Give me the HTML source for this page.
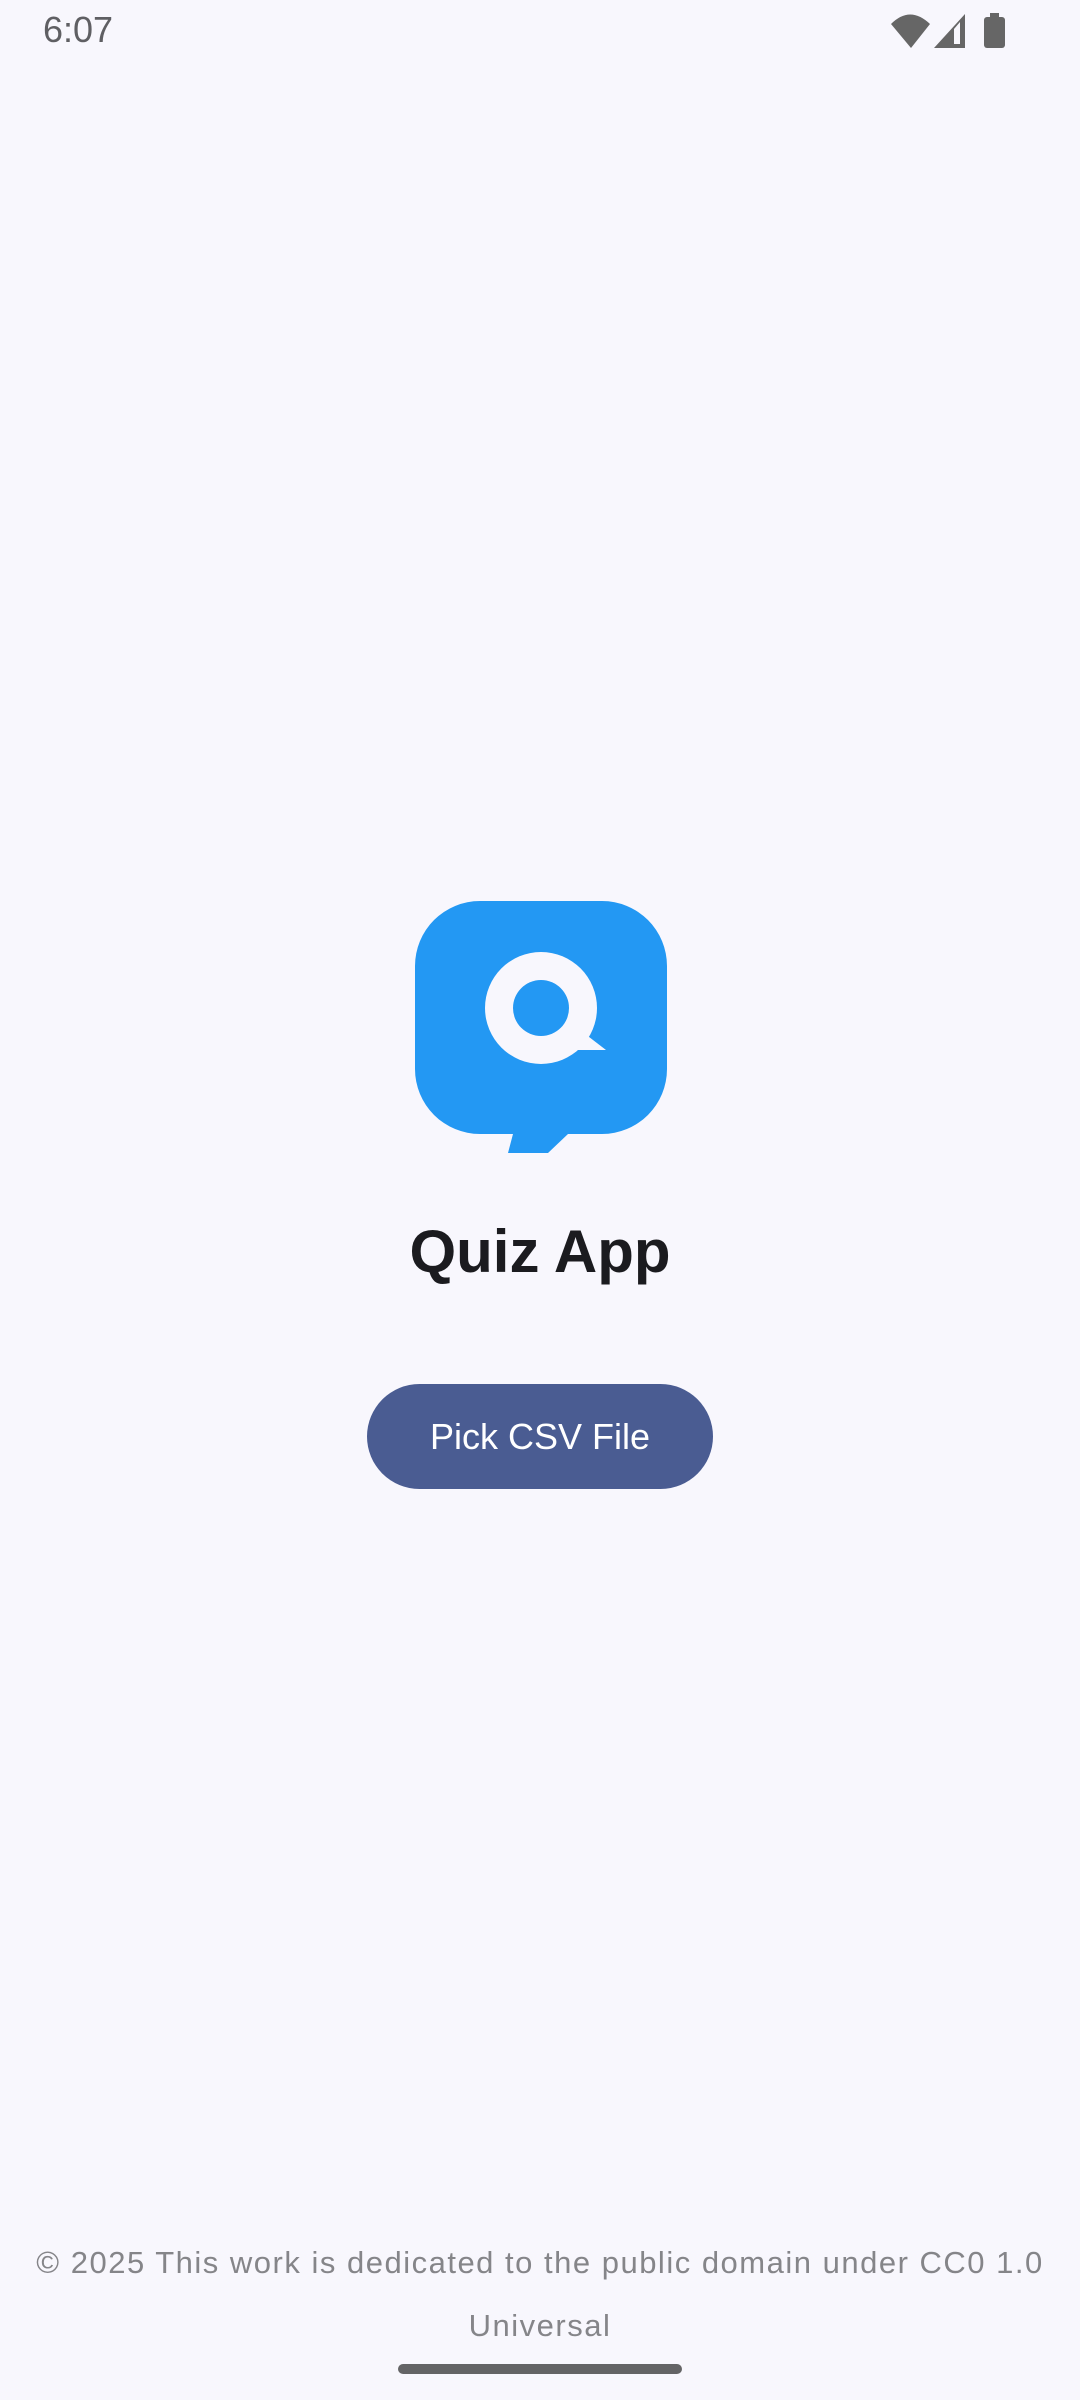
<!DOCTYPE html>
<html><head><meta charset="utf-8"><style>
html,body{margin:0;padding:0;}
body{width:1080px;height:2400px;background:#f8f7fd;position:relative;overflow:hidden;font-family:"Liberation Sans",sans-serif;}
.abs{position:absolute;}
</style></head><body>
<div class="abs" style="left:43px;top:8px;font-size:36px;color:#5f5f63;line-height:44px;">6:07</div>
<svg class="abs" style="left:880px;top:10px" width="140" height="44" viewBox="880 10 140 44">
<path d="M891 24 Q910 5 930 24 L911 48 Z" fill="#666"/>
<path d="M934 48 L965 14 L965 48 Z" fill="#666"/>
<path d="M954 29 L960 22 L960 44 L954 44 Z" fill="#f8f7fd"/>
<rect x="984" y="17" width="21" height="31" rx="3" fill="#666"/>
<rect x="990" y="13" width="9" height="5" fill="#666"/>
</svg>
<svg class="abs" style="left:0;top:0" width="1080" height="1200" viewBox="0 0 1080 1200">
<path d="M480 901 H602 A65 65 0 0 1 667 966 V1069 A65 65 0 0 1 602 1134 H568 L548 1153 H508 L513 1134 H480 A65 65 0 0 1 415 1069 V966 A65 65 0 0 1 480 901 Z" fill="#2398f3"/>
<circle cx="541" cy="1008" r="56" fill="#f8f7fd"/>
<path d="M580 1030 L606 1050 L573 1050 L560 1040 Z" fill="#f8f7fd"/>
<circle cx="541" cy="1008" r="28" fill="#2398f3"/>
</svg>
<div class="abs" style="left:0;width:1080px;top:1212px;text-align:center;font-size:60px;font-weight:bold;color:#1b1b1f;line-height:80px;">Quiz App</div>
<div class="abs" style="left:367px;top:1384px;width:346px;height:105px;border-radius:53px;background:#4a5c92;color:#fff;text-align:center;line-height:105px;font-size:36px;font-weight:500;">Pick CSV File</div>
<div class="abs" style="left:0;width:1080px;top:2242px;text-align:center;font-size:31px;color:#858589;letter-spacing:1.5px;line-height:42px;white-space:nowrap;">© 2025 This work is dedicated to the public domain under CC0 1.0</div>
<div class="abs" style="left:0;width:1080px;top:2305px;text-align:center;font-size:31px;color:#858589;letter-spacing:1.5px;line-height:42px;">Universal</div>
<div class="abs" style="left:398px;top:2364px;width:284px;height:10px;border-radius:5px;background:#646466;"></div>
</body></html>
